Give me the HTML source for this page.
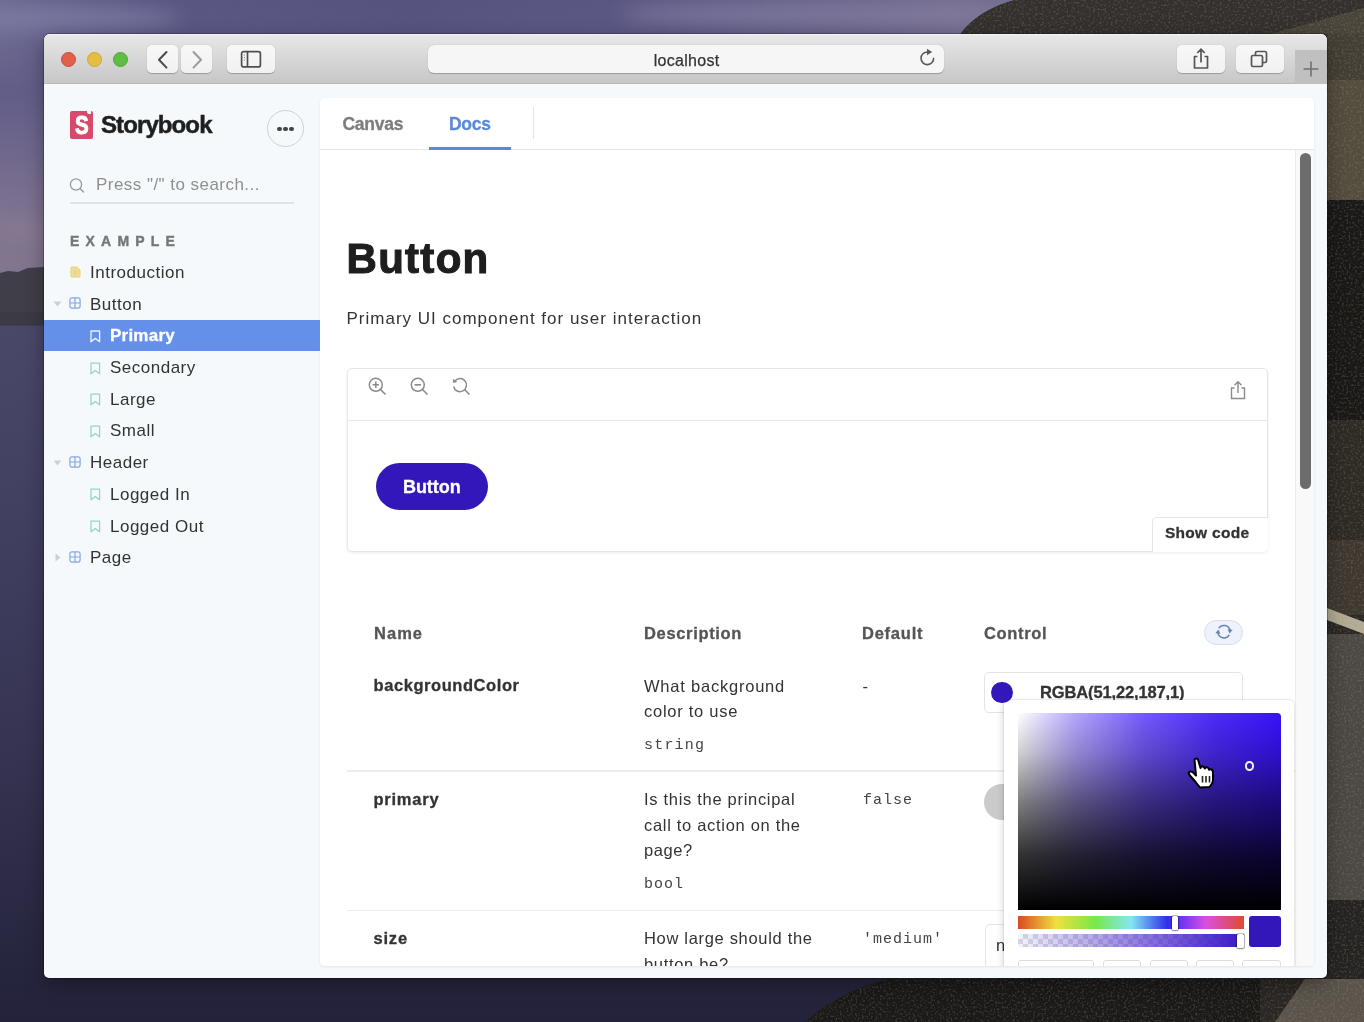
<!DOCTYPE html>
<html><head><meta charset="utf-8">
<style>
*{box-sizing:border-box;margin:0;padding:0}
html,body{width:1364px;height:1022px;overflow:hidden}
#ui,#mainc,#sb,#tbicons{will-change:transform}
body{position:relative;font-family:"Liberation Sans",sans-serif;color:#333;background:#2f2d48}
.abs{position:absolute}
#bg{position:absolute;left:0;top:0;width:1364px;height:1022px;overflow:hidden}
#win{position:absolute;left:44px;top:34px;width:1283px;height:944px;border-radius:6px 6px 5px 5px;overflow:hidden;background:#f6f9fc;box-shadow:0 0 0 1px rgba(0,0,0,.25),0 6px 20px rgba(0,0,0,.35)}
#titlebar{position:absolute;left:0;top:0;width:1283px;height:50px;background:linear-gradient(#e8e8e8,#dcdcdc 35%,#c7c7c7);border-bottom:1px solid #b9b9b9;box-shadow:inset 0 1px 0 rgba(255,255,255,.55)}
.tl{position:absolute;top:18px;width:15px;height:15px;border-radius:50%}
.tbtn{position:absolute;top:11px;height:28px;background:linear-gradient(#f8f8f8,#f1f1f1);border-radius:5px;box-shadow:0 0.5px 1px rgba(0,0,0,.25)}
#addr{position:absolute;left:384px;top:11px;width:516px;height:28px;border-radius:6px;background:#f6f6f6;box-shadow:0 0.5px 1px rgba(0,0,0,.25)}
#plus{position:absolute;left:1251px;top:16px;width:32px;height:34px;background:#c0c0c0}
.t{position:absolute;white-space:nowrap;line-height:1;-webkit-font-smoothing:antialiased}
#sidebar{position:absolute;left:0;top:50px;width:276px;height:895px}
#main{position:absolute;left:276px;top:64px;width:994px;height:868px;background:#fff;border-radius:5px;box-shadow:0 1px 3px rgba(0,0,0,.08);overflow:hidden}
</style></head><body>
<div id="bg"><svg id="bgsvg" width="1364" height="1022" viewBox="0 0 1364 1022" style="position:absolute;left:0;top:0">
<defs>
<linearGradient id="sky" x1="0" y1="0" x2="0" y2="1">
<stop offset="0" stop-color="#5a5784"/><stop offset="0.3" stop-color="#635e88"/><stop offset="0.6" stop-color="#7a7090"/><stop offset="0.8" stop-color="#82768e"/><stop offset="1" stop-color="#7c7088"/>
</linearGradient>
<linearGradient id="skyx" x1="0" y1="0" x2="1" y2="0">
<stop offset="0" stop-color="#7c7a9c" stop-opacity=".55"/><stop offset="0.12" stop-color="#5a5780" stop-opacity=".25"/><stop offset="0.3" stop-color="#4e4b78" stop-opacity=".35"/><stop offset="0.5" stop-color="#5e5a84" stop-opacity=".1"/><stop offset="0.7" stop-color="#857c98" stop-opacity=".55"/><stop offset="1" stop-color="#857c98" stop-opacity=".55"/>
</linearGradient>
<linearGradient id="sea" x1="0" y1="0" x2="0" y2="1">
<stop offset="0" stop-color="#4a4868"/><stop offset="0.25" stop-color="#434162"/><stop offset="0.6" stop-color="#363452"/><stop offset="1" stop-color="#23223a"/>
</linearGradient>
<linearGradient id="skyfade" x1="0" y1="0" x2="0" y2="1"><stop offset="0" stop-color="#fff"/><stop offset="0.4" stop-color="#fff"/><stop offset="1" stop-color="#000"/></linearGradient>
<filter id="blur4" x="-50%" y="-200%" width="200%" height="500%"><feGaussianBlur stdDeviation="9"/></filter>
<filter id="rock" x="0" y="0" width="100%" height="100%">
<feTurbulence type="fractalNoise" baseFrequency="0.45" numOctaves="2" seed="7" result="n"/>
<feColorMatrix in="n" type="matrix" values="0 0 0 0 0  0 0 0 0 0  0 0 0 0 0  0 0 0 5 -2.6" result="a"/>
<feComposite in="SourceGraphic" in2="a" operator="in"/>
</filter>
<clipPath id="mtn"><path d="M956 40 C968 22 985 8 1015 0 L1364 0 L1364 1022 L805 1022 C830 1000 860 985 900 975 L956 975 Z"/></clipPath>
</defs>
<rect x="0" y="0" width="1364" height="330" fill="url(#sky)"/>
<mask id="skym"><rect x="0" y="0" width="1364" height="90" fill="url(#skyfade)"/></mask><rect x="0" y="0" width="1364" height="90" fill="url(#skyx)" mask="url(#skym)"/>
<g filter="url(#blur4)" opacity=".55">
<ellipse cx="60" cy="18" rx="120" ry="12" fill="#8a88b0"/>
<ellipse cx="820" cy="14" rx="200" ry="14" fill="#8e86a4"/>
<ellipse cx="20" cy="230" rx="60" ry="14" fill="#8a7d92"/>
</g>
<rect x="0" y="322" width="1364" height="700" fill="url(#sea)"/>
<path d="M0 273 L8 271 L18 272 L28 268 L44 267 L60 267 L60 325 L0 325 Z" fill="#403e48"/>
<rect x="0" y="312" width="60" height="14" fill="#3a3844" opacity=".6"/>
<g clip-path="url(#mtn)">
<rect x="780" y="0" width="584" height="1022" fill="#2a2724"/>
<path d="M956 40 C968 22 985 8 1015 0 L1364 0 L1364 34 Z" fill="#33302d"/>
<path d="M1270 34 C1300 26 1335 16 1364 8 L1364 34 Z" fill="#4a453b"/>
<rect x="1327" y="34" width="37" height="46" fill="#443f36"/>
<rect x="1327" y="80" width="37" height="120" fill="#534d3e"/>
<rect x="1327" y="200" width="37" height="220" fill="#1b1917"/>
<rect x="1327" y="420" width="37" height="120" fill="#2e2a24"/>
<rect x="1327" y="540" width="37" height="75" fill="#3e3830"/>
<path d="M1327 608 L1364 622 L1364 634 L1327 620 Z" fill="#b4ac94"/>
<rect x="1327" y="634" width="37" height="266" fill="#4c4843"/>
<rect x="1327" y="900" width="37" height="122" fill="#262422"/>
<rect x="780" y="979" width="480" height="43" fill="#1c1a19"/>
<path d="M1275 1022 L1305 979 L1364 979 L1364 1022 Z" fill="#5a544c"/>
<rect x="780" y="0" width="584" height="1022" fill="#a09684" filter="url(#rock)" opacity=".22"/>
</g>
</svg></div>
<div id="win">
  <div id="titlebar">
    <div class="tl" style="left:17px;background:#e0604a;border:1px solid #c44f3c"></div>
    <div class="tl" style="left:43px;background:#e6bd3f;border:1px solid #cfa637"></div>
    <div class="tl" style="left:69px;background:#5fbd44;border:1px solid #52a53a"></div>
    <div class="tbtn" style="left:103px;width:31px"></div>
    <div class="tbtn" style="left:137px;width:31px"></div>
    <div class="tbtn" style="left:183px;width:48px"></div>
    <div id="addr"></div>
    <div class="tbtn" style="left:1133px;width:48px"></div>
    <div class="tbtn" style="left:1192px;width:48px"></div>
    <div id="plus"></div>
  </div>
  <div id="sidebar"></div>
  <div id="main"></div>
</div>
<div id="tbicons">
<svg class="abs" style="left:156px;top:50px" width="14" height="20" viewBox="0 0 14 20"><path d="M10.5 2 L3 9.8 L10.5 17.6" fill="none" stroke="#4a4a4a" stroke-width="2" stroke-linecap="round" stroke-linejoin="round"/></svg>
<svg class="abs" style="left:190px;top:50px" width="14" height="20" viewBox="0 0 14 20"><path d="M3.5 2 L11 9.8 L3.5 17.6" fill="none" stroke="#9a9a9a" stroke-width="2" stroke-linecap="round" stroke-linejoin="round"/></svg>
<svg class="abs" style="left:240px;top:50px" width="22" height="19" viewBox="0 0 22 19"><rect x="1.6" y="1.6" width="18.8" height="15.3" rx="2" fill="none" stroke="#4f4f4f" stroke-width="1.7"/><path d="M7.5 1.6 V16.9" stroke="#4f4f4f" stroke-width="1.7"/><path d="M4.4 4.5 V5.5 M4.4 7 V8 M4.4 9.5 V10.5" stroke="#777" stroke-width="1"/></svg>
<div class="t" style="left:653.7px;top:53.3px;font-size:16px;color:#333;letter-spacing:0.3px;-webkit-text-stroke:0.25px #333">localhost</div>
<svg class="abs" style="left:918px;top:48px" width="20" height="20" viewBox="0 0 20 20"><path d="M15.6 9.8 A6.3 6.3 0 1 1 9.5 4" fill="none" stroke="#5a5a5a" stroke-width="1.6"/><path d="M9 0.8 L14.2 4 L9 7.2 Z" fill="#5a5a5a"/></svg>
<svg class="abs" style="left:1190px;top:47px" width="22" height="24" viewBox="0 0 22 24"><path d="M7.5 9.5 H4.5 V21 H17.5 V9.5 H14.5" fill="none" stroke="#555" stroke-width="1.7" stroke-linejoin="round"/><path d="M11 15.5 V2.5 M7.3 6 L11 2.3 L14.7 6" fill="none" stroke="#555" stroke-width="1.7"/></svg>
<svg class="abs" style="left:1249px;top:49px" width="22" height="20" viewBox="0 0 22 20"><rect x="2.5" y="6.5" width="11" height="11" rx="1.5" fill="none" stroke="#555" stroke-width="1.7"/><path d="M6.5 6.5 V4 Q6.5 2.5 8 2.5 H16 Q17.5 2.5 17.5 4 V12 Q17.5 13.5 16 13.5 H13.5" fill="none" stroke="#555" stroke-width="1.7"/></svg>
<svg class="abs" style="left:1302px;top:60px" width="18" height="18" viewBox="0 0 18 18"><path d="M9 1.5 V16.5 M1.5 9 H16.5" stroke="#707070" stroke-width="1.6"/></svg>
</div>
<div id="mainc" style="position:absolute;left:320px;top:98px;width:994px;height:868px;overflow:hidden;border-radius:5px">
<div class="abs" style="left:0.0px;top:51.0px;width:994.0px;height:1.0px;background:#e4e6e9"></div>
<div class="t" style="left:22.5px;top:17.5px;font-size:17.5px;font-weight:bold;color:#7d7d7d;letter-spacing:-0.27px;font-family:'Liberation Sans';;-webkit-text-stroke:0.3px currentColor">Canvas</div>
<div class="t" style="left:129.0px;top:17.5px;font-size:17.5px;font-weight:bold;color:#5b89d8;letter-spacing:-0.27px;font-family:'Liberation Sans';;-webkit-text-stroke:0.3px currentColor">Docs</div>
<div class="abs" style="left:109.0px;top:48.5px;width:82.0px;height:3.5px;background:#5b89d8"></div>
<div class="abs" style="left:213.0px;top:9.0px;width:1.0px;height:32.0px;background:#e2e4e7"></div>
<div class="abs" style="left:975.0px;top:52.0px;width:19.0px;height:816.0px;background:#f9f9f9;border-left:1px solid #ededed"></div>
<div class="abs" style="left:980.0px;top:55.0px;width:10.5px;height:336.0px;background:#6c6c6c;border-radius:6px"></div>
<div class="t" style="left:26.5px;top:139.6px;font-size:42px;font-weight:bold;color:#1e1e1e;letter-spacing:1.3px;font-family:'Liberation Sans';-webkit-text-stroke:1.1px #1e1e1e">Button</div>
<div class="t" style="left:26.5px;top:211.6px;font-size:17px;font-weight:normal;color:#333;letter-spacing:1.0px;font-family:'Liberation Sans';">Primary UI component for user interaction</div>
<div class="abs" style="left:26.5px;top:269.5px;width:921.5px;height:184.5px;border:1.5px solid #e6e6e6;border-radius:5px;box-shadow:0 1px 3px rgba(0,0,0,.08);background:#fff"></div>
<div class="abs" style="left:27.0px;top:321.5px;width:920.0px;height:1.5px;background:#e8e8e8"></div>
<svg class="abs" style="left:48px;top:279px" width="19" height="19" viewBox="0 0 19 19"><circle cx="7.8" cy="7.8" r="6.5" fill="none" stroke="#8a8a8a" stroke-width="1.5"/><path d="M4.6 7.8 H11 M7.8 4.6 V11" stroke="#8a8a8a" stroke-width="1.6"/><path d="M12.5 12.5 L17.5 17.5" stroke="#8a8a8a" stroke-width="1.6"/></svg>
<svg class="abs" style="left:90px;top:279px" width="19" height="19" viewBox="0 0 19 19"><circle cx="7.8" cy="7.8" r="6.5" fill="none" stroke="#8a8a8a" stroke-width="1.5"/><path d="M4.6 7.8 H11" stroke="#8a8a8a" stroke-width="1.6"/><path d="M12.5 12.5 L17.5 17.5" stroke="#8a8a8a" stroke-width="1.6"/></svg>
<svg class="abs" style="left:132px;top:279px" width="19" height="19" viewBox="0 0 19 19"><path d="M2.6 4.4 A6.5 6.5 0 1 1 1.6 9.5" fill="none" stroke="#8a8a8a" stroke-width="1.5"/><path d="M0.8 1.8 L1.2 6 L5.4 5 Z" fill="#8a8a8a"/><path d="M12.5 12.5 L17.5 17.5" stroke="#8a8a8a" stroke-width="1.6"/></svg>
<svg class="abs" style="left:909px;top:282px" width="18" height="20" viewBox="0 0 18 20"><path d="M5.5 8 H2.5 V18.5 H15.5 V8 H12.5" fill="none" stroke="#8c8c8c" stroke-width="1.4"/><path d="M9 13 V2 M5.5 5.2 L9 1.8 L12.5 5.2" fill="none" stroke="#8c8c8c" stroke-width="1.4"/></svg>
<div class="abs" style="left:56.0px;top:364.5px;width:112.0px;height:47.0px;background:#3317b8;border-radius:24px"></div>
<div class="t" style="left:83.0px;top:379.7px;font-size:18px;font-weight:bold;color:#fff;letter-spacing:-0.07px;font-family:'Liberation Sans';;-webkit-text-stroke:0.3px currentColor">Button</div>
<div class="abs" style="left:831.5px;top:418.5px;width:116.0px;height:35.5px;border-top:1.5px solid #e6e6e6;border-left:1.5px solid #e6e6e6;border-radius:5px 0 5px 0;background:#fff"></div>
<div class="t" style="left:845.0px;top:427.2px;font-size:15.5px;font-weight:bold;color:#333;letter-spacing:0.28px;font-family:'Liberation Sans';;-webkit-text-stroke:0.3px currentColor">Show code</div>
<div class="t" style="left:54.0px;top:526.8px;font-size:16.5px;font-weight:bold;color:#555;letter-spacing:1.03px;font-family:'Liberation Sans';;-webkit-text-stroke:0.3px currentColor">Name</div>
<div class="t" style="left:324.0px;top:526.8px;font-size:16.5px;font-weight:bold;color:#555;letter-spacing:0.66px;font-family:'Liberation Sans';;-webkit-text-stroke:0.3px currentColor">Description</div>
<div class="t" style="left:542.0px;top:526.8px;font-size:16.5px;font-weight:bold;color:#555;letter-spacing:0.76px;font-family:'Liberation Sans';;-webkit-text-stroke:0.3px currentColor">Default</div>
<div class="t" style="left:664.0px;top:526.8px;font-size:16.5px;font-weight:bold;color:#555;letter-spacing:0.65px;font-family:'Liberation Sans';;-webkit-text-stroke:0.3px currentColor">Control</div>
<div class="abs" style="left:884.0px;top:521.5px;width:39.0px;height:25.5px;background:#edf2fb;border:1px solid #d9dde4;border-radius:13px"></div>
<svg class="abs" style="left:894px;top:526px" width="20" height="16" viewBox="0 0 20 16"><g transform="translate(10 7.5)" fill="none" stroke="#6a80bd" stroke-width="1.5"><path d="M-5.2 -3.3 A6.2 6.2 0 0 1 6 -1.2"/><path d="M5.3 3.4 A6.2 6.2 0 0 1 -6.1 1.2"/></g><path d="M13.6 5.2 L18.6 5.8 L15.6 9.6 Z" fill="#6a80bd"/><path d="M6.4 9.8 L1.4 9.2 L4.4 5.4 Z" fill="#6a80bd"/></svg>
<div class="t" style="left:53.5px;top:579.0px;font-size:16.5px;font-weight:bold;color:#333;letter-spacing:0.57px;font-family:'Liberation Sans';;-webkit-text-stroke:0.3px currentColor">backgroundColor</div>
<div class="t" style="left:324.0px;top:579.5px;font-size:16.5px;font-weight:normal;color:#333;letter-spacing:0.78px;font-family:'Liberation Sans';">What background</div>
<div class="t" style="left:324.0px;top:605.3px;font-size:16.5px;font-weight:normal;color:#333;letter-spacing:0.73px;font-family:'Liberation Sans';">color to use</div>
<div class="t" style="left:324.0px;top:640.4px;font-size:15px;font-weight:normal;color:#444;letter-spacing:1.2px;font-family:'Liberation Mono';">string</div>
<div class="t" style="left:542.5px;top:579.5px;font-size:16.5px;font-weight:normal;color:#333;letter-spacing:0px;font-family:'Liberation Sans';">-</div>
<div class="abs" style="left:26.5px;top:672.0px;width:948.0px;height:1.5px;background:#ececec"></div>
<div class="abs" style="left:664.0px;top:574.0px;width:259.0px;height:40.5px;border:1px solid #e4e4e4;border-radius:5px;background:#fff"></div>
<div class="t" style="left:720.0px;top:586.0px;font-size:16.5px;font-weight:bold;color:#333;letter-spacing:-0.14px;font-family:'Liberation Sans';;-webkit-text-stroke:0.3px currentColor">RGBA(51,22,187,1)</div>
<div class="t" style="left:53.5px;top:692.8px;font-size:16.5px;font-weight:bold;color:#333;letter-spacing:0.76px;font-family:'Liberation Sans';;-webkit-text-stroke:0.3px currentColor">primary</div>
<div class="t" style="left:324.0px;top:692.8px;font-size:16.5px;font-weight:normal;color:#333;letter-spacing:0.7px;font-family:'Liberation Sans';">Is this the principal</div>
<div class="t" style="left:324.0px;top:718.5px;font-size:16.5px;font-weight:normal;color:#333;letter-spacing:0.69px;font-family:'Liberation Sans';">call to action on the</div>
<div class="t" style="left:324.0px;top:744.1px;font-size:16.5px;font-weight:normal;color:#333;letter-spacing:0.55px;font-family:'Liberation Sans';">page?</div>
<div class="t" style="left:324.0px;top:778.6px;font-size:15px;font-weight:normal;color:#444;letter-spacing:1px;font-family:'Liberation Mono';">bool</div>
<div class="t" style="left:543.0px;top:694.5px;font-size:15px;font-weight:normal;color:#444;letter-spacing:1px;font-family:'Liberation Mono';">false</div>
<div class="abs" style="left:664.0px;top:686.3px;width:60.0px;height:36.0px;background:#cbcbcb;border-radius:18px"></div>
<div class="abs" style="left:26.5px;top:811.5px;width:948.0px;height:1.5px;background:#ececec"></div>
<div class="t" style="left:53.5px;top:832.1px;font-size:16.5px;font-weight:bold;color:#333;letter-spacing:0.80px;font-family:'Liberation Sans';;-webkit-text-stroke:0.3px currentColor">size</div>
<div class="t" style="left:324.0px;top:832.1px;font-size:16.5px;font-weight:normal;color:#333;letter-spacing:0.68px;font-family:'Liberation Sans';">How large should the</div>
<div class="t" style="left:324.0px;top:858.0px;font-size:16.5px;font-weight:normal;color:#333;letter-spacing:0.68px;font-family:'Liberation Sans';">button be?</div>
<div class="t" style="left:543.0px;top:834.2px;font-size:15px;font-weight:normal;color:#444;letter-spacing:1px;font-family:'Liberation Mono';">'medium'</div>
<div class="abs" style="left:665.0px;top:826.0px;width:120.0px;height:45.0px;border:1px solid #e4e4e4;border-radius:5px;background:#fff"></div>
<div class="t" style="left:676.0px;top:839.0px;font-size:16.5px;font-weight:normal;color:#333;letter-spacing:0px;font-family:'Liberation Sans';">n</div>
<div class="abs" style="left:684.0px;top:601.5px;width:290.0px;height:280.0px;background:#fff;border-radius:5px;box-shadow:0 0 0 1px rgba(0,0,0,.06),-2px 2px 6px rgba(0,0,0,.12)"></div>
<div class="abs" style="left:671.0px;top:583.5px;width:21.5px;height:21.5px;background:#3317b8;border-radius:50%"></div>
<div class="abs" style="left:697.5px;top:615.0px;width:263.0px;height:197.0px;background:linear-gradient(to top,#000 0%,rgba(0,0,0,.8) 28%,rgba(0,0,0,.5) 55%,rgba(0,0,0,.18) 80%,rgba(0,0,0,0) 100%),linear-gradient(to right,#fff 0%,rgba(255,255,255,.62) 22%,rgba(255,255,255,.3) 48%,rgba(255,255,255,.1) 75%,rgba(255,255,255,0) 100%),#3812fa;border-radius:4px 4px 0 0"></div>
<div class="abs" style="left:924.6px;top:663.2px;width:9.6px;height:9.6px;border:2px solid #f4f0ff;border-radius:50%"></div>
<div class="abs" style="left:697.5px;top:818.0px;width:226.0px;height:12.5px;background:linear-gradient(to right,#d94a22 0%,#f0e040 17%,#78e848 34%,#86e6f2 50%,#2c30e8 66%,#8a3af0 75%,#d850e0 83%,#e04a30 100%)"></div>
<div class="abs" style="left:851.5px;top:817.5px;width:6.5px;height:14px;background:#fff;border-radius:1.5px;box-shadow:0 0 0 1px rgba(0,0,0,.25),0 1px 2px rgba(0,0,0,.3)"></div>
<div class="abs" style="left:697.5px;top:836.0px;width:226.0px;height:12.8px;background:linear-gradient(to right,rgba(58,22,200,.05),rgba(58,22,200,1)),repeating-conic-gradient(#e0e0e0 0 25%,#fff 0 50%) 0 0/10px 10px"></div>
<div class="abs" style="left:917.0px;top:835.5px;width:6.5px;height:14px;background:#fff;border-radius:1.5px;box-shadow:0 0 0 1px rgba(0,0,0,.25),0 1px 2px rgba(0,0,0,.3)"></div>
<div class="abs" style="left:929.0px;top:818.0px;width:31.5px;height:31.0px;background:#3317b8;border-radius:3px"></div>
<div class="abs" style="left:698.0px;top:862.0px;width:76.0px;height:20.0px;border:1px solid #dcdcdc;border-radius:3px"></div>
<div class="abs" style="left:782.5px;top:862.0px;width:38.5px;height:20.0px;border:1px solid #dcdcdc;border-radius:3px"></div>
<div class="abs" style="left:829.5px;top:862.0px;width:38.0px;height:20.0px;border:1px solid #dcdcdc;border-radius:3px"></div>
<div class="abs" style="left:876.0px;top:862.0px;width:37.5px;height:20.0px;border:1px solid #dcdcdc;border-radius:3px"></div>
<div class="abs" style="left:922.0px;top:862.0px;width:38.5px;height:20.0px;border:1px solid #dcdcdc;border-radius:3px"></div>
</div>
<svg class="abs" style="left:1185px;top:755px" width="34" height="36" viewBox="0 0 34 36">
<path d="M9.5 4.5 Q11.5 2.5 13 4.5 L15.5 13 Q16 11 18 11.5 Q19.5 12 19.8 13.5 Q20.5 12 22.3 12.4 Q24 13 24 14.8 Q25 13.8 26.5 14.5 Q28 15.3 28 17.5 L28 25 Q28 28 26 30 L24.5 32 L15 32.5 Q13 30 11 27.5 L4.5 20 Q3 18 4.5 16.8 Q6 15.8 8 17.5 L11 20.5 Z" fill="#fff" stroke="#000" stroke-width="2" stroke-linejoin="round"/>
<path d="M17.5 21 V27.5 M21 21 V27.5 M24.5 21 V27.5" stroke="#222" stroke-width="1.6"/>
</svg>
<div id="sb">
<div class="abs" style="left:70px;top:111px;width:23px;height:28px;background:#d7496d;border-radius:2px"></div>
<div class="abs" style="left:87px;top:110px;width:4px;height:4px;background:#f6f9fc;border-radius:0 0 0 2px"></div>
<div class="t" style="left:75.2px;top:112.5px;font-size:25px;font-weight:bold;color:#fff;-webkit-text-stroke:1px #fff;transform:scaleX(0.82);transform-origin:0 0">S</div>
<div class="t" style="left:101.0px;top:113.0px;font-size:24px;font-weight:bold;color:#1f1f1f;letter-spacing:-0.9px;font-family:'Liberation Sans';-webkit-text-stroke:0.5px #1f1f1f">Storybook</div>
<div class="abs" style="left:267px;top:110.3px;width:36.8px;height:36.8px;border-radius:50%;border:1.4px solid #cdcfd3;background:#f6f9fc"></div>
<div class="abs" style="left:277.4px;top:126.6px;width:4.4px;height:4.4px;border-radius:50%;background:#444"></div>
<div class="abs" style="left:283.2px;top:126.6px;width:4.4px;height:4.4px;border-radius:50%;background:#444"></div>
<div class="abs" style="left:289.2px;top:126.6px;width:4.4px;height:4.4px;border-radius:50%;background:#444"></div>
<svg class="abs" style="left:69px;top:177px" width="17" height="17" viewBox="0 0 17 17"><circle cx="7" cy="7.5" r="5.6" fill="none" stroke="#9a9a9a" stroke-width="1.3"/><path d="M11 11.5 L14.5 15" stroke="#9a9a9a" stroke-width="1.4" stroke-linecap="round"/></svg>
<div class="abs" style="left:70px;top:202px;width:224px;height:2px;background:#dfe3e8"></div>
<div class="t" style="left:96.0px;top:176.0px;font-size:17px;font-weight:normal;color:#8f8f8f;letter-spacing:0.46px;font-family:'Liberation Sans';">Press "/" to search...</div>
<div class="t" style="left:70.0px;top:234.3px;font-size:14px;font-weight:bold;color:#767676;letter-spacing:6.2px;font-family:'Liberation Sans';-webkit-text-stroke:0.4px #767676">EXAMPLE</div>
<div class="abs" style="left:44px;top:319.5px;width:276px;height:31.3px;background:#6590e9"></div>
<svg class="abs" style="left:69.5px;top:266.0px" width="11" height="12" viewBox="0 0 11 12"><path d="M1 1.5 Q1 1 1.5 1 L7 1 L10 4 L10 10.5 Q10 11 9.5 11 L1.5 11 Q1 11 1 10.5 Z" fill="#f0de98" stroke="#e6d07a" stroke-width="1"/><rect x="3.5" y="4" width="4" height="5" fill="#e6d07a" opacity=".5"/></svg>
<div class="t" style="left:90.0px;top:263.9px;font-size:17px;font-weight:normal;color:#333;letter-spacing:0.5px;font-family:'Liberation Sans';">Introduction</div>
<svg class="abs" style="left:69px;top:297.3px" width="12" height="12" viewBox="0 0 12 12"><rect x="0.9" y="0.9" width="10.2" height="10.2" rx="2" fill="#f2f6fd" stroke="#86a6e2" stroke-width="1.15"/><path d="M6 1 V11 M1 6 H11" stroke="#86a6e2" stroke-width="1.15"/></svg>
<svg class="abs" style="left:53px;top:301.1px" width="9" height="6" viewBox="0 0 9 6"><path d="M0.5 0.5 L8.5 0.5 L4.5 5.5 Z" fill="#cfcfcf"/></svg>
<div class="t" style="left:90.0px;top:295.7px;font-size:17px;font-weight:normal;color:#333;letter-spacing:0.5px;font-family:'Liberation Sans';">Button</div>
<svg class="abs" style="left:90px;top:329.8px" width="11" height="13" viewBox="0 0 11 13"><path d="M1 1 H9.6 V11.8 L5.3 8.4 L1 11.8 Z" fill="none" stroke="#e6f4ff" stroke-width="1.35" stroke-linejoin="round"/></svg>
<div class="t" style="left:110.0px;top:327.4px;font-size:17px;font-weight:bold;color:#ffffff;letter-spacing:0.23px;font-family:'Liberation Sans';;-webkit-text-stroke:0.3px currentColor">Primary</div>
<svg class="abs" style="left:90px;top:361.5px" width="11" height="13" viewBox="0 0 11 13"><path d="M1 1 H9.6 V11.8 L5.3 8.4 L1 11.8 Z" fill="none" stroke="#93d5c9" stroke-width="1.25" stroke-linejoin="round"/></svg>
<div class="t" style="left:110.0px;top:359.1px;font-size:17px;font-weight:normal;color:#333;letter-spacing:0.5px;font-family:'Liberation Sans';">Secondary</div>
<svg class="abs" style="left:90px;top:393.2px" width="11" height="13" viewBox="0 0 11 13"><path d="M1 1 H9.6 V11.8 L5.3 8.4 L1 11.8 Z" fill="none" stroke="#93d5c9" stroke-width="1.25" stroke-linejoin="round"/></svg>
<div class="t" style="left:110.0px;top:390.8px;font-size:17px;font-weight:normal;color:#333;letter-spacing:0.5px;font-family:'Liberation Sans';">Large</div>
<svg class="abs" style="left:90px;top:424.9px" width="11" height="13" viewBox="0 0 11 13"><path d="M1 1 H9.6 V11.8 L5.3 8.4 L1 11.8 Z" fill="none" stroke="#93d5c9" stroke-width="1.25" stroke-linejoin="round"/></svg>
<div class="t" style="left:110.0px;top:422.4px;font-size:17px;font-weight:normal;color:#333;letter-spacing:0.5px;font-family:'Liberation Sans';">Small</div>
<svg class="abs" style="left:69px;top:455.8px" width="12" height="12" viewBox="0 0 12 12"><rect x="0.9" y="0.9" width="10.2" height="10.2" rx="2" fill="#f2f6fd" stroke="#86a6e2" stroke-width="1.15"/><path d="M6 1 V11 M1 6 H11" stroke="#86a6e2" stroke-width="1.15"/></svg>
<svg class="abs" style="left:53px;top:459.6px" width="9" height="6" viewBox="0 0 9 6"><path d="M0.5 0.5 L8.5 0.5 L4.5 5.5 Z" fill="#cfcfcf"/></svg>
<div class="t" style="left:90.0px;top:454.2px;font-size:17px;font-weight:normal;color:#333;letter-spacing:0.5px;font-family:'Liberation Sans';">Header</div>
<svg class="abs" style="left:90px;top:488.3px" width="11" height="13" viewBox="0 0 11 13"><path d="M1 1 H9.6 V11.8 L5.3 8.4 L1 11.8 Z" fill="none" stroke="#93d5c9" stroke-width="1.25" stroke-linejoin="round"/></svg>
<div class="t" style="left:110.0px;top:485.9px;font-size:17px;font-weight:normal;color:#333;letter-spacing:0.5px;font-family:'Liberation Sans';">Logged In</div>
<svg class="abs" style="left:90px;top:520.0px" width="11" height="13" viewBox="0 0 11 13"><path d="M1 1 H9.6 V11.8 L5.3 8.4 L1 11.8 Z" fill="none" stroke="#93d5c9" stroke-width="1.25" stroke-linejoin="round"/></svg>
<div class="t" style="left:110.0px;top:517.5px;font-size:17px;font-weight:normal;color:#333;letter-spacing:0.5px;font-family:'Liberation Sans';">Logged Out</div>
<svg class="abs" style="left:69px;top:550.9px" width="12" height="12" viewBox="0 0 12 12"><rect x="0.9" y="0.9" width="10.2" height="10.2" rx="2" fill="#f2f6fd" stroke="#86a6e2" stroke-width="1.15"/><path d="M6 1 V11 M1 6 H11" stroke="#86a6e2" stroke-width="1.15"/></svg>
<svg class="abs" style="left:55px;top:553.2px" width="6" height="9" viewBox="0 0 6 9"><path d="M0.5 0.5 L0.5 8.5 L5.5 4.5 Z" fill="#cfcfcf"/></svg>
<div class="t" style="left:90.0px;top:549.2px;font-size:17px;font-weight:normal;color:#333;letter-spacing:0.5px;font-family:'Liberation Sans';">Page</div>
</div>
</body></html>
